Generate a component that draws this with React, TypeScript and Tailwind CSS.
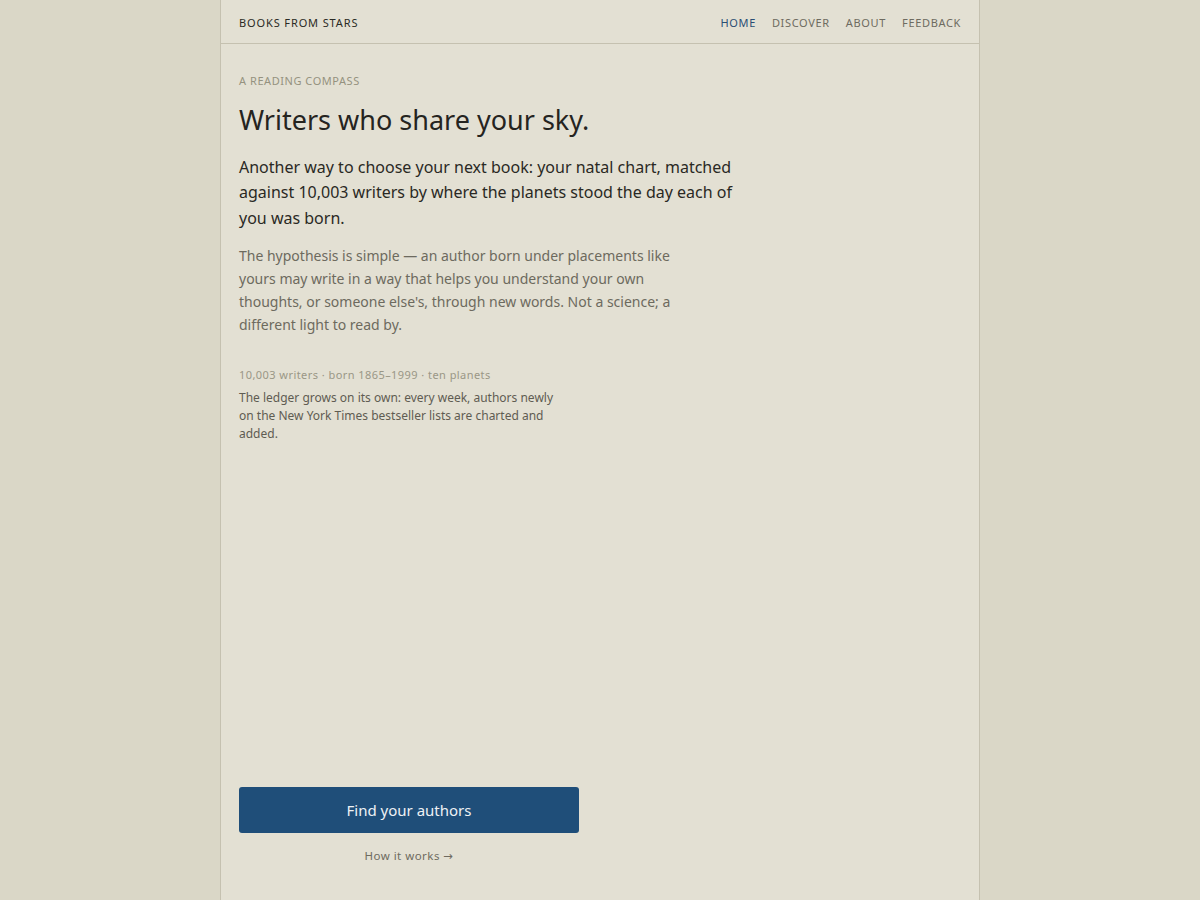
const nav = [
  { label: "Home", active: true },
  { label: "Discover", active: false },
  { label: "About", active: false },
  { label: "Feedback", active: false },
];

export default function App() {
  return (
    <div className="min-h-screen bg-[#dad7c7] font-['Noto_Sans',sans-serif]">
      <div className="mx-auto flex min-h-screen w-[760px] flex-col border-x border-[#c5c1b0] bg-[#e3e0d3]">
        <header className="flex h-[44px] items-center justify-between border-b border-[#c5c1b0] px-[18px] pt-[3px]">
          <span className="text-[11px] tracking-[0.08em] text-[#2a2a24] uppercase">Books from Stars</span>
          <nav className="flex items-center gap-4">
            {nav.map((item) => (
              <a
                key={item.label}
                href="#"
                className={`text-[11px] tracking-[0.06em] uppercase ${
                  item.active ? "text-[#2a4e74]" : "text-[#6e6b60]"
                }`}
              >
                {item.label}
              </a>
            ))}
          </nav>
        </header>

        <main className="flex flex-1 flex-col px-[18px] pt-[29px] pb-[35px]">
          <p className="text-[11px] tracking-[0.05em] text-[#95927f] uppercase">A reading compass</p>
          <h1 className="mt-[11px] text-[27px] leading-[38px] text-[#25241f]">Writers who share your sky.</h1>
          <p className="mt-[16px] max-w-[500px] text-[16px] leading-[25.5px] text-[#2a2924]">
            Another way to choose your next book: your natal chart, matched against 10,003 writers by where
            the planets stood the day each of you was born.
          </p>
          <p className="mt-[13px] max-w-[445px] text-[14px] leading-[23px] text-[#6d6a5e]">
            The hypothesis is simple — an author born under placements like yours may write in a way that
            helps you understand your own thoughts, or someone else's, through new words. Not a science; a
            different light to read by.
          </p>

          <p className="mt-[31px] text-[11px] tracking-[0.04em] text-[#9a9786]">
            10,003 writers · born 1865–1999 · ten planets
          </p>
          <p className="mt-[5px] max-w-[320px] text-[12px] leading-[18px] text-[#5f5c52]">
            The ledger grows on its own: every week, authors newly on the New York Times bestseller lists are
            charted and added.
          </p>

          <div className="mt-auto flex w-[340px] flex-col items-center">
            <button className="h-[46px] w-full rounded-[3px] bg-[#1f4e79] text-[15px] text-[#eef1f4]">
              Find your authors
            </button>
            <a href="#" className="mt-[14px] text-[11.5px] tracking-[0.04em] text-[#6e6b60]">
              How it works <span className="font-['DejaVu_Sans',sans-serif]">→</span>
            </a>
          </div>
        </main>
      </div>
    </div>
  );
}
